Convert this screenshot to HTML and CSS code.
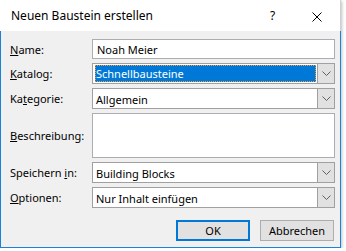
FILE: index.html
```html
<!DOCTYPE html>
<html>
<head>
<meta charset="UTF-8">
<title>Neuen Baustein erstellen</title>
<link rel="stylesheet" href="styles.css">
</head>
<body>

<div class="dlg">
	<div class="titlebar">
		<span class="title">Neuen Baustein erstellen</span>
		<span class="help">?</span>
		<span class="close">
			<svg width="10" height="10" viewBox="0 0 10 10"><path d="M0.5 0.5 L9.5 9.5 M9.5 0.5 L0.5 9.5" stroke="#000" stroke-width="1" fill="none"/></svg>
		</span>
	</div>

	<div class="content">
		<form class="form">
			<label class="lbl"><u>N</u>ame:</label>
			<div class="txt">Noah Meier</div>

			<label class="lbl"><u>K</u>atalog:</label>
			<div class="combo">
				<div class="val"><span class="sel">Schnellbausteine</span></div>
				<div class="arrow"><svg width="9" height="5" viewBox="0 0 9 5"><path d="M0.5 0.5 L4.5 4.5 L8.5 0.5" stroke="#606060" fill="none"/></svg></div>
			</div>

			<label class="lbl">Ka<u>t</u>egorie:</label>
			<div class="combo">
				<div class="val">Allgemein</div>
				<div class="arrow"><svg width="9" height="5" viewBox="0 0 9 5"><path d="M0.5 0.5 L4.5 4.5 L8.5 0.5" stroke="#606060" fill="none"/></svg></div>
			</div>

			<label class="lbl"><u>B</u>eschreibung:</label>
			<div class="txt area"></div>

			<label class="lbl">Speichern <u>i</u>n:</label>
			<div class="combo">
				<div class="val">Building Blocks</div>
				<div class="arrow"><svg width="9" height="5" viewBox="0 0 9 5"><path d="M0.5 0.5 L4.5 4.5 L8.5 0.5" stroke="#606060" fill="none"/></svg></div>
			</div>

			<label class="lbl"><u>O</u>ptionen:</label>
			<div class="combo">
				<div class="val">Nur Inhalt einfügen</div>
				<div class="arrow"><svg width="9" height="5" viewBox="0 0 9 5"><path d="M0.5 0.5 L4.5 4.5 L8.5 0.5" stroke="#606060" fill="none"/></svg></div>
			</div>
		</form>

		<div class="buttons">
			<button type="button" class="btn ok">OK</button>
			<button type="button" class="btn">Abbrechen</button>
		</div>
	</div>
</div>

</body>
</html>
```

FILE: styles.css
```css
* { box-sizing: border-box; }

body
{
	margin: 0;
	background-color: #ffffff;
	font-family: "Noto Sans", "Open Sans", sans-serif;
	font-size: 11px;
	color: #000;
}

.dlg
{
	width: 341px;
	height: 248px;
	display: flex;
	flex-direction: column;
	box-shadow: 1px 1px 3px rgba(0,0,0,0.25);
}

.titlebar
{
	height: 31px;
	background-color: #fff;
	display: flex;
	align-items: center;
	padding-left: 11px;
	border-right: 1px solid #d0d0d0;
	font-size: 12px;
}
.title { flex: 1; }
.help { width: 42px; }
.close { width: 28px; padding-top: 3px; }

.content
{
	flex: 1;
	background-color: #f0f0f0;
	border: 1px solid #1a83d8;
	border-top: none;
	padding: 8px 5px 0 8px;
}

.form
{
	display: grid;
	grid-template-columns: 83px 243px;
	grid-template-rows: 20px 21px 21px 45px 21px 21px;
	row-gap: 4px;
	align-items: center;
}

.lbl { padding-left: 1px; }

.txt
{
	height: 100%;
	background-color: #fff;
	border: 1px solid #abadb3;
	padding: 2px 0 0 4px;
}

.combo
{
	height: 100%;
	display: flex;
	background-color: #fff;
	border: 1px solid #a0a0a0;
}
.combo .val
{
	flex: 1;
	padding: 3px 0 0 3px;
}
.combo .sel
{
	display: block;
	height: 17px;
	margin: -2px 1px 0 -1px;
	padding: 1px 0 0 1px;
	background-color: #0078d7;
	color: #fff;
	outline: 1px dotted #f59b3a;
	outline-offset: -1px;
}
.combo .arrow
{
	width: 17px;
	background-color: #e1e1e1;
	border-left: 1px solid #a0a0a0;
	display: flex;
	align-items: center;
	justify-content: center;
}

.buttons
{
	display: flex;
	justify-content: flex-end;
	gap: 10px;
	margin-top: 12px;
	padding-right: 1px;
}

.btn
{
	width: 74px;
	height: 21px;
	font-family: inherit;
	font-size: 11px;
	background-color: #e1e1e1;
	border: 1px solid #adadad;
	padding: 0;
	color: #000;
}
.btn.ok { border: 2px solid #0078d7; }
```
